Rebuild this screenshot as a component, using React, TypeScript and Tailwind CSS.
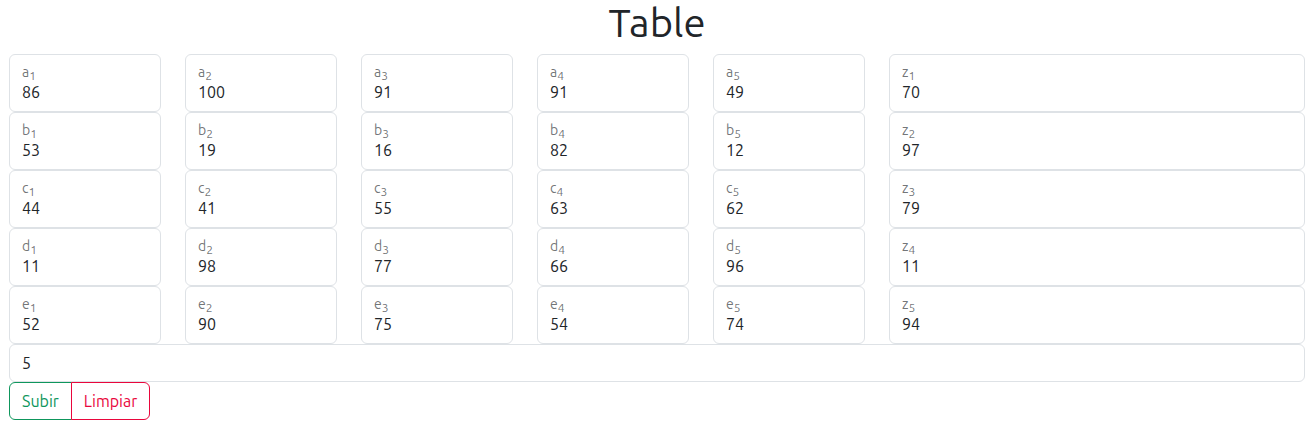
type Cell = { name: string; index: number; value: number };

const rows: { name: string; values: number[]; z: number }[] = [
  { name: "a", values: [86, 100, 91, 91, 49], z: 70 },
  { name: "b", values: [53, 19, 16, 82, 12], z: 97 },
  { name: "c", values: [44, 41, 55, 63, 62], z: 79 },
  { name: "d", values: [11, 98, 77, 66, 96], z: 11 },
  { name: "e", values: [52, 90, 75, 54, 74], z: 94 },
];

function Field({ name, index, value, wide = false }: Cell & { wide?: boolean }) {
  const id = `${name}-${index}`;
  return (
    <div
      className={`${wide ? "col-span-5" : "col-span-2"} flex flex-col rounded-md border border-[#dee2e6] px-3 pt-[7px] pb-[9px]`}
    >
      <label htmlFor={id} className="h-5 text-sm leading-5 text-[#212529]/65">
        {name}
        <sub className="text-xs">{index}</sub>
      </label>
      <input
        id={id}
        defaultValue={value}
        inputMode="numeric"
        className="h-5 w-full bg-transparent leading-5 outline-none"
      />
    </div>
  );
}

export default function App() {
  return (
    <main className="bg-white pr-2 pl-[9px] font-[Ubuntu,'Noto_Sans',sans-serif] text-base text-[#212529]">
      <h1 className="mb-2 text-center text-[40px] leading-[46px]">Table</h1>
      <form onSubmit={(e) => e.preventDefault()}>
        <div className="grid grid-cols-15 gap-x-6">
          {rows.map((row, r) => [
            ...row.values.map((value, c) => (
              <Field key={`${row.name}${c}`} name={row.name} index={c + 1} value={value} />
            )),
            <Field key={`z${r}`} name="z" index={r + 1} value={row.z} wide />,
          ])}
        </div>
        <input
          aria-label="n"
          defaultValue="5"
          inputMode="numeric"
          className="block w-full rounded-md border border-[#dee2e6] px-3 py-1.5 leading-6 outline-none"
        />
        <div className="flex">
          <button
            type="submit"
            className="rounded-l-md border border-[#0e965c] px-3 py-1.5 leading-6 text-[#0e965c]"
          >
            Subir
          </button>
          <button
            type="reset"
            className="-ml-px rounded-r-md border border-[#e9063c] px-3 py-1.5 leading-6 text-[#e9063c]"
          >
            Limpiar
          </button>
        </div>
      </form>
    </main>
  );
}
